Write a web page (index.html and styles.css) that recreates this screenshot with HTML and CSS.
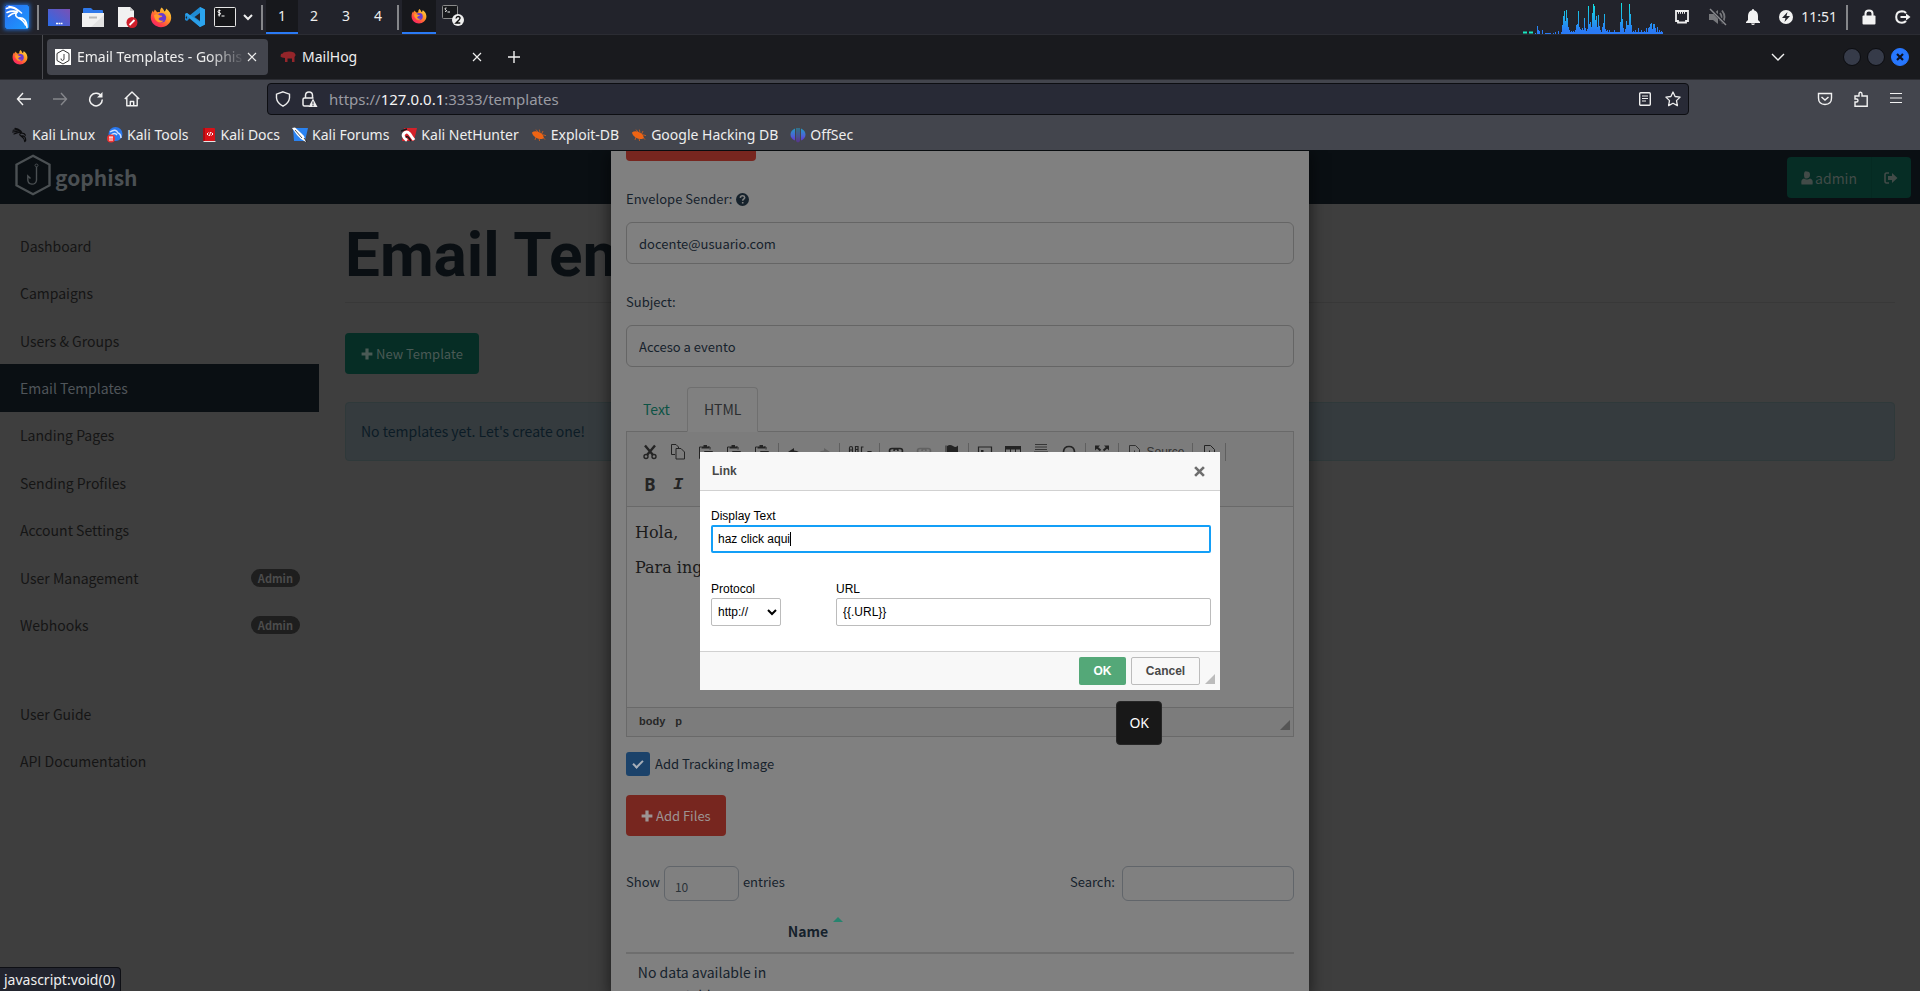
FILE: index.html
```html
<!DOCTYPE html>
<html lang="en">
<head>
<meta charset="utf-8">
<title>Email Templates - Gophish</title>
<link rel="stylesheet" href="styles.css">
</head>
<body>
<svg class="defs" aria-hidden="true">
  <defs>
    <linearGradient id="g-kali" x1="0" y1="0" x2="1" y2="1"><stop offset="0" stop-color="#2a6cf0"/><stop offset="1" stop-color="#1b9bff"/></linearGradient>
    <linearGradient id="g-desk" x1="0" y1="1" x2="1" y2="0"><stop offset="0" stop-color="#2a6be8"/><stop offset="1" stop-color="#7a50b4"/></linearGradient>
    <linearGradient id="g-fox" x1="1" y1="0" x2="0.2" y2="1"><stop offset="0" stop-color="#ffe14a"/><stop offset="0.45" stop-color="#ff9524"/><stop offset="0.8" stop-color="#ff3b4a"/><stop offset="1" stop-color="#f5246d"/></linearGradient>
    <linearGradient id="g-off" x1="0" y1="0" x2="0" y2="1"><stop offset="0" stop-color="#1f9fc4"/><stop offset="0.55" stop-color="#4c62d6"/><stop offset="1" stop-color="#6a22c8"/></linearGradient>
    <linearGradient id="g-cpu" gradientUnits="userSpaceOnUse" x1="0" y1="0" x2="0" y2="34"><stop offset="0" stop-color="#0ff0dc"/><stop offset="0.9" stop-color="#2a7af5"/></linearGradient>
    <symbol id="dragon" viewBox="0 0 16 16"><path d="M1.2 3.2 Q4 2.2 8 3.8 M.6 5 Q4 4.4 7.6 5 M2 7 Q5 5.6 8 5.2 M3 1.4 Q6 1.8 8.4 3.8 Q10 5 8.8 6 Q6.6 7.4 9 9 Q14.2 8.4 13.6 13.8 M9 6.2 Q12.6 5.6 13.4 8.2 M9 9 Q12 10.6 12.8 14.6" fill="none" stroke="currentColor" stroke-width="1.2" stroke-linecap="round"/></symbol>
    <symbol id="firefox" viewBox="0 0 22 22"><path d="M11.6 1.4 C13.2 2.6 14 4 14.2 5.6 C15.6 5 16.2 3.6 16 2.6 C19.6 5 21.4 8.4 21.2 12 C20.8 17.4 16.4 21.2 11 21.2 C5.2 21.2 1 17 .8 11.6 C.8 8.6 1.8 6 3 4.6 L3.6 6.4 L4.8 3.4 L7.2 6.2 C8.4 6 9 6 10 6.2 C9.8 4.4 10.4 2.6 11.6 1.4 Z" fill="url(#g-fox)"/><circle cx="11.4" cy="11.8" r="4.8" fill="#6a3ad0"/><path d="M4 9 Q7 7 10 9.6 Q12.6 9.4 12.2 10.8 Q9 11.4 8.4 13 Q10 15.6 13.6 14.4 Q11.4 17.6 7.6 15.8 Q4.2 13.4 4 9Z" fill="#ff9a2a"/></symbol>
    <symbol id="bug" viewBox="0 0 16 16"><path d="M1 5.4 C4 3 8.4 4.6 11.6 7.4 L12.8 10.6 C12.6 12 10.4 12.4 8 11.8 C4.6 11 1.6 8.6 1 5.4Z" fill="#ee6414"/><path d="M5 2.600 L7 5 M8.4 2.6 L9 5.6 M12 4 L10.6 7 M11.8 7.8 L15 8.6 M11.6 10 L14 12.6 M8 11 L8.6 14 M5 9.8 L4 13" stroke="#ee6414" stroke-width=".7"/></symbol>
    <symbol id="plus" viewBox="0 0 12 12"><path d="M4.4 0.6h3.2v3.8h3.8v3.2H7.6v3.8H4.4V7.6H.6V4.4h3.8Z" fill="currentColor"/></symbol>
    <symbol id="close" viewBox="0 0 10 10"><path d="M1 1l8 8M9 1l-8 8" stroke="currentColor" stroke-width="1.2"/></symbol>
    <symbol id="hook" viewBox="0 0 36 48"><path d="M18 2 L34.500 12 V36 L18 46 L1.500 36 V12Z" fill="none" stroke="currentColor" stroke-width="2.400"/><circle cx="21.500" cy="13" r="1.500" fill="none" stroke="currentColor"/><path d="M21.500 14.500 V30 Q21 34.500 17 34.500 Q12.500 34 12.800 28.500 V25 L15.500 28" fill="none" stroke="currentColor" stroke-width="1.400"/></symbol>
    <symbol id="paste" viewBox="0 0 16 16"><path d="M3.500 14.500H1.500V3h2M12 5.500V3h-2M6.500 14.500V7.500h8v7Z" fill="none" stroke="currentColor"/><path d="M3.500 4.500V2.500H5.500V1H9v1.500h2v2Z" fill="currentColor"/></symbol>
    <symbol id="chain" viewBox="0 0 16 16"><path d="M7 9.500H4Q1.500 9.500 1.500 7T4 4.500h3.500Q10 4.500 10 7M9 9.500h3Q14.500 9.500 14.500 7T12 4.500H9Q6 4.500 6 7" fill="none" stroke="currentColor" stroke-width="1.600"/></symbol>
    <symbol id="page" viewBox="0 0 16 16"><path d="M3.500 14.500v-13h6l4 4v9Z" fill="none" stroke="currentColor"/><path d="M6 9h5M8.500 6.500v5" stroke="currentColor"/></symbol>
  </defs>
</svg>

<header class="panel">
  <button class="launcher kali" aria-label="Applications"><svg width="24" height="24" viewBox="0 0 24 24"><rect width="24" height="24" rx="2" fill="url(#g-kali)"/><path d="M1.500 3.500Q7 .8 12.500 5.200M2 7.500Q6.500 5.500 12 6.500M3.500 11.500Q7 8 12 7.500M4 1.500Q10 2 13 5.200 L16.500 8M12.500 7Q8.500 10.800 13.500 13Q21.500 12 22 22.500M13.500 13Q18.500 15.500 20.500 20" fill="none" stroke="#fff" stroke-width="1.600" stroke-linecap="round"/></svg></button>
  <span class="rule"></span>
  <div class="launchers">
    <button class="launcher" aria-label="Show desktop"><svg width="22" height="22" viewBox="0 0 22 22"><rect y="3" width="22" height="17" fill="url(#g-desk)"/><path d="M8 17.500h2M10.500 17.500h2M13 17.500h1.500" stroke="#fff" stroke-width="1.400"/></svg></button>
    <button class="launcher" aria-label="Files"><svg width="22" height="22" viewBox="0 0 22 22"><path d="M1 8V3q0-1 1-1h7l2 2h9q1 0 1 1v4Z" fill="#2f78ea"/><rect y="7" width="22" height="14" fill="#f1f1f1"/><path d="M22 9v12H9Z" fill="#e2e2e2"/><path d="M7 11.500h8" stroke="#b9b9b9" stroke-width="2"/></svg></button>
    <button class="launcher" aria-label="Text editor"><svg width="22" height="22" viewBox="0 0 22 22"><path d="M2 1h12l4 4v16H2Z" fill="#f1f1f1"/><path d="M14 1l4 4h-4Z" fill="#c9c9c9"/><circle cx="16" cy="16.500" r="5.500" fill="#cf1f2b"/><path d="M13.500 19l5-5" stroke="#fff" stroke-width="1.800"/></svg></button>
    <button class="launcher" aria-label="Firefox"><svg width="22" height="22"><use href="#firefox"/></svg></button>
    <button class="launcher" aria-label="Code"><svg width="22" height="22" viewBox="0 0 22 22"><path d="M16 1l5 2.500v15L16 21 5.500 12.500 3 15l-2-1V8l2-1 2.500 2.500Z" fill="#1f8ad2"/><path d="M1 8l2-1 13 9v5Z" fill="#2b9fe8"/><path d="M16 1l5 2.500v15L16 21Z" fill="#2ba4ee"/><path d="M16 7v8l-5.500-4Z" fill="#22232b"/><path d="M1.500 11.500l1.500-1.500v3Z" fill="#22232b"/></svg></button>
    <button class="launcher term" aria-label="Terminal"><svg width="22" height="22" viewBox="0 0 22 22"><rect x=".5" y="1.500" width="21" height="19" rx="1" fill="#151619" stroke="#e6e6e6"/><path d="M6.500 4.500q-2.500-.3-2.500 1t1.300 1.200 1.200 1.200q0 1.200-2.600 1M5.200 3.500v7M7.500 10h3" fill="none" stroke="#fff"/></svg></button>
    <button class="launcher chev" aria-label="More"><svg width="10" height="22" viewBox="0 0 10 22"><path d="M1 9l4 4 4-4" fill="none" stroke="#eee" stroke-width="2"/></svg></button>
  </div>
  <span class="rule"></span>
  <nav class="spaces"><button class="space on">1</button><button class="space">2</button><button class="space">3</button><button class="space">4</button></nav>
  <span class="rule"></span>
  <button class="task on" aria-label="Firefox window"><svg width="16" height="16"><use href="#firefox"/></svg></button>
  <button class="task" aria-label="Terminal windows"><svg width="22" height="22" viewBox="0 0 22 22"><rect x=".5" y=".5" width="15" height="13" rx="1" fill="#17181b" stroke="#8a8a8a"/><path d="M4.500 3q-2 0-1.500 1t1.500 1.500-1.500 1M5.500 7H8" fill="none" stroke="#eee"/><circle cx="16" cy="15" r="6" fill="#efefef"/><path d="M14 13.500q.3-2 2.200-2t1.800 1.800q0 1-4 4.700h4.300" fill="none" stroke="#111" stroke-width="1.400"/></svg></button>
  <span class="grow"></span>
  <svg class="cpu" width="140" height="34" viewBox="0 0 140 34"><path d="M0 32.500h4M6 32.500h4" stroke="#19e6c0" stroke-width="2"/><path d="M12.500 34v-1M14.500 34v-8M15.500 34v-4M16.500 34v-3M19.500 34v-4M22 33.500h6M30.500 34v-1M32.500 34v-2M35.500 34v-3M38 33h4M39.500 34v-9M40.500 34v-18M41.500 34V11M42.500 34V21M43.500 34V10M44.500 34V18M45.500 34v-7M46.500 34v-4M48.500 34v-3M50.500 34v-3M52.500 34v-4M53.500 34v-9M54.500 34v-10M55.500 34V11M56.500 34v-7M57.500 34v-5M58.500 34v-4M59.500 34v-6M60.500 34v-4M61.500 34V18M62.500 34v-6M63.500 34v-3M64.500 34v-5M65.500 34V6M66.500 34V24M67.500 34V22M68.500 34V27M69.500 34V13M70.500 34V4M71.500 34V6M72.500 34V20M73.500 34V16M74.500 34v-7M75.500 34V15M76.500 34v-8M77.500 34v-4M79.500 34v-7M80.500 34V23M81.500 34V14M82.500 34v-5M83.500 34v-3M84.500 34v-4M86.500 34v-4M88.500 34v-2M91.500 34v-4M93 33h4M97.500 34V22M98.500 34V3M99.500 34V19M100.500 34v-6M102.500 34v-5M103.500 34V21M104.500 34v-9M105.500 34v-9M106.500 34V4M107.500 34V14M108.500 34v-9M110.500 34v-3M112.500 34v-4M115.500 34v-6M118.500 34v-4M121.500 34v-3M123.500 34v-6M125.500 34v-6M126.500 34v-7M127.500 34v-10M128.500 34v-11M129.500 34v-5M130.500 34V24M131.500 34V24M132.500 34v-6M134.500 34v-7M136.500 34v-4M138.500 34v-3" stroke="url(#g-cpu)"/><path d="M38 33h102" stroke="#2a7af5" stroke-width="2"/></svg>
  <div class="tray">
    <button class="launcher" aria-label="Network"><svg width="16" height="16" viewBox="0 0 16 16"><path d="M2 2h12v10h-2v1.500H4V12H2Z" fill="none" stroke="#eee" stroke-width="1.800"/><path d="M4 3.500h8" stroke="#eee" stroke-width="2.500" stroke-dasharray="1 1"/></svg></button>
    <button class="launcher" aria-label="Volume"><svg width="18" height="18" viewBox="0 0 18 18"><path d="M0 6h4l5-4v14l-5-4H0Z" fill="#77787c"/><path d="M11 5q3 4 0 8M13 2.500q5 6.500 0 13" fill="none" stroke="#77787c" stroke-width="1.800"/><path d="M2 1l15 16" stroke="#22232b" stroke-width="3"/><path d="M1 1l16 16" stroke="#8a8b8f" stroke-width="1.500"/></svg></button>
    <button class="launcher" aria-label="Notifications"><svg width="14" height="16" viewBox="0 0 14 16"><path d="M7 0q1 0 1 1.200Q12 2.500 12 7v4l2 2v1H0v-1l2-2V7q0-4.500 4-5.800Q6 0 7 0ZM5 14.500h4Q8.500 16 7 16t-2-1.500Z" fill="#f2f2f2"/></svg></button>
    <button class="launcher" aria-label="Power"><svg width="14" height="14" viewBox="0 0 14 14"><circle cx="7" cy="7" r="7" fill="#f2f2f2"/><path d="M8.500 2L3 8h3.500L5.500 12 11 6H7.500Z" fill="#22232b"/></svg></button>
  </div>
  <time class="clock">11:51</time>
  <span class="rule"></span>
  <button class="launcher lock" aria-label="Lock"><svg width="14" height="16" viewBox="0 0 14 16"><rect x=".5" y="6.500" width="13" height="9" rx="1" fill="#f2f2f2"/><path d="M3.500 8V4.500q0-3 3.500-3t3.500 3V8" fill="none" stroke="#f2f2f2" stroke-width="2"/></svg></button>
  <button class="launcher" aria-label="Log out"><svg width="16" height="14" viewBox="0 0 16 14"><path d="M11 3Q9.500 1.200 7 1.200 1.200 1.500 1.200 7t5.800 5.800q2.500 0 4-1.800" fill="none" stroke="#f2f2f2" stroke-width="2"/><path d="M5.500 7H12" stroke="#f2f2f2" stroke-width="2"/><path d="M11 3.500L15.500 7 11 10.500Z" fill="#f2f2f2"/></svg></button>
</header>

<div class="tabs-bar">
  <span class="pinned"><svg width="16" height="16"><use href="#firefox"/></svg></span>
  <div class="tab on"><svg width="16" height="16" viewBox="0 0 16 16"><rect width="16" height="16" fill="#fff"/><path d="M8 1l6 3.500v7L8 15l-6-3.500v-7Z" fill="none" stroke="#333"/><path d="M9 5v5q-.3 1.500-1.600 1.500T6 9.500" fill="none" stroke="#444"/></svg><span class="tab-title fade">Email Templates - Gophish</span><button class="tab-x" aria-label="Close tab"><svg width="10" height="10"><use href="#close"/></svg></button></div>
  <div class="tab"><svg width="16" height="16" viewBox="0 0 16 16"><path d="M1 5q2 0 3-2 1 .5 1.500 0Q10 2 14 3.500q2 2 1.500 3L14.500 8v5H12V9.500H7.500V13H5V9L2 8.500.5 7.500Z" fill="#94252a"/></svg><span class="tab-title">MailHog</span><button class="tab-x" aria-label="Close tab"><svg width="10" height="10"><use href="#close"/></svg></button></div>
  <button class="tool" aria-label="New tab"><svg width="12" height="12" viewBox="0 0 12 12"><path d="M6 0v12M0 6h12" stroke="currentColor" stroke-width="1.400"/></svg></button>
  <span class="grow"></span>
  <button class="tool" aria-label="List all tabs"><svg width="14" height="14" viewBox="0 0 14 14"><path d="M1 4l6 6 6-6" fill="none" stroke="currentColor" stroke-width="1.400"/></svg></button>
  <div class="win"><button class="dot" aria-label="Minimize"></button><button class="dot" aria-label="Maximize"></button><button class="dot blue" aria-label="Close"><svg width="8" height="8" viewBox="0 0 8 8"><path d="M1 1l6 6M7 1L1 7" stroke="#0d1020" stroke-width="2.200"/></svg></button></div>
</div>

<div class="chrome">
  <div class="navbar">
    <div class="nav-left">
      <button class="tool" aria-label="Back"><svg width="16" height="16" viewBox="0 0 16 16"><path d="M15 8H1.500M7 2L1.500 8 7 14" fill="none" stroke="currentColor" stroke-width="1.400"/></svg></button>
      <button class="tool dim" aria-label="Forward"><svg width="16" height="16" viewBox="0 0 16 16"><path d="M1 8h13.500M9 2l5.500 6L9 14" fill="none" stroke="currentColor" stroke-width="1.400"/></svg></button>
      <button class="tool" aria-label="Reload"><svg width="16" height="16" viewBox="0 0 16 16"><path d="M13.500 5.500A6.300 6.300 0 1 0 14.300 8.500" fill="none" stroke="currentColor" stroke-width="1.500"/><path d="M14.500 1v5.500H9Z" fill="currentColor"/></svg></button>
      <button class="tool" aria-label="Home"><svg width="16" height="16" viewBox="0 0 16 16"><path d="M.8 8L8 1l7.200 7M2.800 6.500v8.300h10.400V6.500M6.300 14.500v-4h3.400v4" fill="none" stroke="currentColor" stroke-width="1.400" stroke-linejoin="round"/></svg></button>
    </div>
    <div class="urlbar">
      <svg width="16" height="16" viewBox="0 0 16 16"><path d="M8 .8l6.500 2.400V7q-.5 5-6.500 8.200Q2 12 1.500 7V3.200Z" fill="none" stroke="#eee" stroke-width="1.400"/></svg>
      <svg width="16" height="17" viewBox="0 0 16 17"><path d="M3.500 7V4.500Q3.500 1 7 1t3.500 3.500V7M7 15H2.500Q1 15 1 13.500v-5Q1 7 2.500 7h9" fill="none" stroke="#eee" stroke-width="1.500"/><path d="M11 7.500L15.500 16h-9Z" fill="#eee"/><path d="M11 10.500v3M11 14v1.200" stroke="#282a36"/></svg>
      <span class="url">https://<b>127.0.0.1</b>:3333/templates</span>
      <svg width="14" height="14" viewBox="0 0 14 14"><rect x="1.700" y=".7" width="10.600" height="12.600" rx="1" fill="none" stroke="#eee" stroke-width="1.400"/><path d="M4 4h6M4 6.500h6M4 9h4" stroke="#eee"/></svg>
      <svg class="star" width="16" height="16" viewBox="0 0 16 16"><path d="M8 1l2.100 4.500 5 .6-3.600 3.500.9 5L8 12.200l-4.400 2.400.9-5L.9 6.100l5-.6Z" fill="none" stroke="#eee" stroke-width="1.300" stroke-linejoin="round"/></svg>
    </div>
    <div class="nav-right">
      <button class="tool" aria-label="Pocket"><svg width="16" height="16" viewBox="0 0 16 16"><path d="M1.500 2.500h13V7q0 6.500-6.500 6.500T1.500 7Z" fill="none" stroke="currentColor" stroke-width="1.400"/><path d="M4.500 6L8 9l3.500-3" fill="none" stroke="currentColor" stroke-width="1.500"/></svg></button>
      <button class="tool" aria-label="Extensions"><svg width="16" height="16" viewBox="0 0 16 16"><path d="M2 15.200V11h1.500q1.500 0 1.500-1.500T3.500 8H2V5h4V3q0-1.800 1.500-1.800T9 3v2h5.200v10.200Z" fill="none" stroke="currentColor" stroke-width="1.400"/></svg></button>
      <button class="tool" aria-label="Menu"><svg width="14" height="14" viewBox="0 0 14 14"><path d="M1 2.500h12M1 7h12M1 11.500h12" stroke="currentColor" stroke-width="1.200"/></svg></button>
    </div>
  </div>
  <nav class="bookmarks">
    <a href="#"><svg class="black" width="16" height="16"><use href="#dragon"/></svg>Kali Linux</a>
    <a href="#"><svg width="16" height="16" viewBox="0 0 16 16"><circle cx="8.500" cy="7" r="7" fill="#2a78ee"/><path d="M3 5q6-4 8 1 3 1 3 5M4 8q4-3 6 0" fill="none" stroke="#cfe2ff" stroke-width="1.500"/><circle cx="4" cy="11.500" r="4" fill="#e33"/><path d="M2 10h4M3 10v4M5 10v4" stroke="#fff"/></svg>Kali Tools</a>
    <a href="#"><svg width="16" height="16" viewBox="0 0 16 16"><rect x="2" y="1" width="12" height="13" rx="1" fill="#d91118"/><path d="M2 1h2v13H2Z" fill="#a90c12"/><path d="M2.500 14h12v1h-12Z" fill="#e6e6e6"/><path d="M7.500 5.500L6 7l1.500 1.500M10.500 5.500L12 7l-1.500 1.500M9.500 5l-1 4" fill="none" stroke="#fff"/></svg>Kali Docs</a>
    <a href="#"><svg width="16" height="16" viewBox="0 0 16 16"><path d="M1 1h15l-3 13H2Z" fill="#2a83f2"/><path d="M0 1l3-.5L9 6l3 3 2 6-5-3-4-4Z" fill="#fff"/><path d="M3 3l7 8M12 11l3 4" stroke="#222" stroke-width=".8"/></svg>Kali Forums</a>
    <a href="#"><svg width="16" height="16" viewBox="0 0 16 16"><path d="M3 1h13l-3 13H1Z" fill="#d4222a"/><path d="M6 13.500Q0 9 3.500 6t7 3.500l2.500 3.500" fill="none" stroke="#fff" stroke-width="3"/><path d="M0 4l6-2M5 10.500q1-2 3 .5l2 3" stroke="#17181b" stroke-width="1.500" fill="none"/></svg>Kali NetHunter</a>
    <a href="#"><svg width="16" height="16"><use href="#bug"/></svg>Exploit-DB</a>
    <a href="#"><svg width="16" height="16"><use href="#bug"/></svg>Google Hacking DB</a>
    <a href="#"><svg width="16" height="16" viewBox="0 0 16 16"><path d="M5 1.500v12Q.5 11.500 .5 7.500T5 1.500ZM6.500 1h1v14.500q-1-.5-1-2ZM8.500 1h1v12.500q0 1.500-1 2ZM11 1.500q4.500 2 4.500 6t-4.500 6Z" fill="url(#g-off)"/></svg>OffSec</a>
  </nav>
</div>

<main class="page">
  <header class="app-bar">
    <a class="brand" href="#"><svg width="36" height="42" viewBox="0 0 36 48" preserveAspectRatio="none"><use href="#hook"/></svg><span>gophish</span></a>
    <div class="user-group">
      <button class="btn user"><svg width="12" height="14" viewBox="0 0 12 14"><path d="M6 .5q3 0 3 3.200T6 7.500 3 3.700 6 .5ZM.5 13.500Q-.5 8 3 7.500q3 2 6 0 3.500.5 2.500 6Z" fill="currentColor"/></svg>admin</button><button class="btn out" aria-label="Sign out"><svg width="14" height="12" viewBox="0 0 14 12"><path d="M5 1H2.500Q1 1 1 3v6q0 2 1.500 2H5" fill="none" stroke="currentColor" stroke-width="1.600"/><path d="M4 4h4V1l5.500 5L8 11V8H4Z" fill="currentColor"/></svg></button>
    </div>
  </header>
  <div class="columns">
    <nav class="sidebar">
      <div class="menu">
        <a href="#">Dashboard</a><a href="#">Campaigns</a><a href="#">Users &amp; Groups</a><a href="#" class="on">Email Templates</a><a href="#">Landing Pages</a><a href="#">Sending Profiles</a><a href="#">Account Settings</a><a href="#">User Management<span class="badge">Admin</span></a><a href="#">Webhooks<span class="badge">Admin</span></a>
      </div>
      <div class="menu short"><a href="#">User Guide</a><a href="#">API Documentation</a></div>
    </nav>
    <section class="content">
      <h1>Email Templates</h1>
      <button class="btn new"><svg width="12" height="12"><use href="#plus"/></svg>New Template</button>
      <div class="alert">No templates yet. Let's create one!</div>
    </section>
  </div>

  <div class="layer">
    <form class="modal">
      <button type="button" class="btn red import" aria-label="Import Email"></button>
      <label class="field-label" for="sender">Envelope Sender: <svg width="13" height="13" viewBox="0 0 13 13"><circle cx="6.500" cy="6.500" r="6.500" fill="currentColor"/><path d="M4.300 4.800q.2-2 2.200-2t2.200 1.700q0 1-1.200 1.700-.8.500-.8 1.600M6.700 9v1.600" fill="none" stroke="#808080" stroke-width="1.600"/></svg></label>
      <input class="field" id="sender" type="text" value="docente@usuario.com">
      <label class="field-label" for="subject">Subject:</label>
      <input class="field" id="subject" type="text" value="Acceso a evento">
      <div class="mode-tabs"><a href="#">Text</a><a href="#" class="on">HTML</a></div>
      <div class="editor">
        <div class="cke-bar">
          <div class="cke-row">
            <button type="button" class="ck" aria-label="Cut"><svg viewBox="0 0 16 16"><path d="M3 1.500L11 11M13 1.500L5 11" stroke="currentColor" stroke-width="2.400"/><circle cx="4" cy="12.500" r="2" fill="none" stroke="currentColor" stroke-width="1.400"/><circle cx="12" cy="12.500" r="2" fill="none" stroke="currentColor" stroke-width="1.400"/></svg></button>
            <button type="button" class="ck" aria-label="Copy"><svg viewBox="0 0 16 16"><path d="M5 10.500H1.500v-10H6l2.500 2.500v1M6 4.500h5l3.500 3.500v7H6Z" fill="none" stroke="currentColor"/></svg></button>
            <button type="button" class="ck" aria-label="Paste"><svg><use href="#paste"/></svg></button>
            <button type="button" class="ck" aria-label="Paste as plain text"><svg><use href="#paste"/></svg></button>
            <button type="button" class="ck" aria-label="Paste from Word"><svg><use href="#paste"/></svg></button>
            <i class="sep"></i>
            <button type="button" class="ck" aria-label="Undo"><svg viewBox="0 0 16 16"><path d="M1 8l6-4v2.500q6 0 7 6-3-3-7-2.500V12Z" fill="currentColor"/></svg></button>
            <button type="button" class="ck off" aria-label="Redo"><svg viewBox="0 0 16 16"><path d="M15 8L9 4v2.500q-6 0-7 6 3-3 7-2.500V12Z" fill="currentColor"/></svg></button>
            <i class="sep"></i>
            <button type="button" class="ck wide" aria-label="Spell check"><svg class="abc" viewBox="0 0 24 16"><path d="M1.500 9V4q0-1.500 1.500-1.500T4.500 4v5M1.500 6h3M7.500 9V2.500H10v6H7.500M7.500 5.500H10M15.500 3h-2v6h2" fill="none" stroke="currentColor" stroke-width="1.200"/><path d="M19 7h5l-2.500 3Z" fill="currentColor"/></svg></button>
            <i class="sep"></i>
            <button type="button" class="ck" aria-label="Link"><svg><use href="#chain"/></svg></button>
            <button type="button" class="ck off" aria-label="Unlink"><svg><use href="#chain"/></svg></button>
            <button type="button" class="ck" aria-label="Anchor"><svg viewBox="0 0 16 16"><path d="M2 1.500V16" stroke="currentColor"/><path d="M3 2q3-2 6 0t5-.5v8.500H3Z" fill="currentColor"/></svg></button>
            <i class="sep"></i>
            <button type="button" class="ck" aria-label="Image"><svg viewBox="0 0 16 16"><path d="M1.500 13.500V3h13v10.500Z" fill="none" stroke="currentColor" stroke-width="1.200"/><path d="M4 6h2.500v2H4ZM2 13l4-3 3 1 2-3 3 5Z" fill="currentColor"/></svg></button>
            <button type="button" class="ck" aria-label="Table"><svg viewBox="0 0 16 16"><path d="M0 2h16v3.500H0Z" fill="currentColor"/><path d="M.5 5v9M5.500 5v9M10.500 5v9M15.500 5v9M0 13.500h16" stroke="currentColor"/></svg></button>
            <button type="button" class="ck" aria-label="Horizontal line"><svg viewBox="0 0 16 16"><path d="M2 .5h12M2 3h12M2 5.500h12M2 12h12" stroke="currentColor" stroke-width=".8"/><path d="M1 8.500h14" stroke="currentColor" stroke-width="2"/></svg></button>
            <button type="button" class="ck" aria-label="Special character"><svg viewBox="0 0 16 16"><path d="M1.500 14h4v-2Q2.500 10 2.500 7.500 3 2.500 8 2.500t5.500 5q0 2.500-3 4.500v2h4" fill="none" stroke="currentColor" stroke-width="1.700"/></svg></button>
            <i class="sep"></i>
            <button type="button" class="ck" aria-label="Maximize"><svg viewBox="0 0 16 16"><path d="M1 1.500h5L1 6.500ZM15 1.500h-5l5 5ZM1 14.500h5l-5-5ZM15 14.500h-5l5-5Z" fill="currentColor"/><path d="M2 2.500l4.500 4M14 2.500l-4.500 4M2 13.500l4.500-4M14 13.500l-4.500-4" stroke="currentColor" stroke-width="2"/></svg></button>
            <i class="sep"></i>
            <button type="button" class="ck source"><svg><use href="#page"/></svg>Source</button>
            <i class="sep"></i>
            <button type="button" class="ck" aria-label="Preview"><svg><use href="#page"/></svg></button>
            <i class="sep"></i>
          </div>
          <div class="cke-row"><button type="button" class="ck letter"><b>B</b></button><button type="button" class="ck letter"><em>I</em></button><button type="button" class="ck letter"><s>S</s></button></div>
        </div>
        <div class="cke-text"><p>Hola,</p><p>Para ingresar</p></div>
        <div class="cke-path"><span>body</span><span>p</span><i class="grip"></i></div>
      </div>
      <div class="check"><input type="checkbox" id="track" checked><label for="track">Add Tracking Image</label></div>
      <button type="button" class="btn red add"><svg width="12" height="12"><use href="#plus"/></svg>Add Files</button>
      <div class="filters">
        <label for="len">Show</label><select id="len"><option>10</option></select><label for="len">entries</label>
        <span class="grow"></span>
        <label for="find">Search:</label><input id="find" type="text">
      </div>
      <table class="files">
        <colgroup><col class="col-a"><col class="col-b"><col></colgroup>
        <thead><tr><th colspan="2"><span class="name">Name<i class="asc"></i></span></th><th></th></tr></thead>
        <tbody><tr><td>No data available in table</td><td></td><td></td></tr></tbody>
      </table>
    </form>
  </div>

  <div class="layer">
    <form class="dialog">
      <div class="dlg-head"><span>Link</span><button type="button" aria-label="Close"><svg width="11" height="11" viewBox="0 0 10 10"><path d="M1 1l8 8M9 1L1 9" stroke="#6e6e6e" stroke-width="2.400"/></svg></button></div>
      <div class="dlg-body">
        <label class="dlg-field" for="text">Display Text<input class="focus" id="text" type="text" value="haz click aqui"></label>
        <div class="dlg-pair">
          <label class="dlg-field" for="proto">Protocol<select id="proto"><option>http://</option></select></label>
          <label class="dlg-field" for="url">URL<input id="url" type="text" value="{{.URL}}"></label>
        </div>
      </div>
      <div class="dlg-foot"><button type="button" class="ok">OK</button><button type="button" class="cancel">Cancel</button><i class="grip"></i></div>
      <div class="tip" role="tooltip">OK</div>
    </form>
  </div>
  <div class="status">javascript:void(0)</div>
</main>
</body>
</html>
```

FILE: styles.css
```css
* { box-sizing: border-box; }
body { margin: 0; height: 100vh; display: flex; flex-direction: column; overflow: hidden; font: 14px/20px "Noto Sans", sans-serif; color: #eeeeee; background: #3e3e3e; }
button { border: 0; background: none; padding: 0; font: inherit; color: inherit; }
a { color: inherit; text-decoration: none; }
svg { display: block; flex: none; }
.defs { position: absolute; width: 0; height: 0; }
.grow { flex: 1; }

/* desktop panel */
.panel { display: flex; align-items: center; height: 35px; flex: none; background: #22232b; border-bottom: 1px solid #2b2c33; padding: 0 9px 0 5px; }
.launcher { display: flex; }
.kali { box-shadow: 0 0 4px 1px #2468c8; }
.rule { width: 2px; height: 25px; background: #85868a; margin-left: 8px; }
.launchers { display: flex; gap: 12px; padding-left: 9px; }
.launchers .term { margin-left: -4px; }
.launchers .chev { margin-left: -5px; }
.spaces { display: flex; align-self: stretch; margin-left: 3px; }
.space, .task { width: 32px; align-self: stretch; display: flex; align-items: center; justify-content: center; border-bottom: 2px solid transparent; }
.spaces + .rule { margin-left: 3px; }
.on.space, .on.task { background: #17181c; border-bottom-color: #2a7af5; }
.task { width: 34px; margin-left: 3px; }
.on.task + .task { margin-left: 0; }
.cpu { margin-right: 11px; align-self: flex-end; }
.tray { display: flex; align-items: center; gap: 19px; margin-right: 8px; }
.clock { margin-right: 1px; }
.lock { margin: 0 19px 0 14px; }

/* tab strip */
.tabs-bar { display: flex; align-items: center; height: 44px; flex: none; background: #191a1e; padding-right: 11px; }
.pinned { width: 43px; height: 44px; padding: 14px 0 0 12px; border-right: 1px solid #4a4b50; margin-right: 4px; }
.tab { display: flex; align-items: center; width: 221px; height: 36px; padding: 0 8px; border-radius: 4px; gap: 6px; }
.tab.on { background: #43454d; }
.tab + .tab { margin-left: 4px; width: 217px; padding: 0 4px 0 8px; }
.tab-title { flex: 1; min-width: 0; overflow: hidden; white-space: nowrap; }
.fade { -webkit-mask-image: linear-gradient(to right, #000 80%, transparent 102%); mask-image: linear-gradient(to right, #000 80%, transparent 102%); }
.tab-x { padding: 3px; margin-left: -4px; }
.tool { display: flex; color: #f2f2f2; }
.tab + .tool { margin-left: 19px; }
.tool.dim { color: #85868b; }
.win { display: flex; gap: 6px; margin-left: 58px; }
.dot { width: 18px; height: 18px; border-radius: 50%; background: #363b49; border: 1px solid #0b0c10; display: flex; align-items: center; justify-content: center; }
.dot.blue { background: #2777ff; border-color: #2777ff; }

/* address bar and bookmarks */
.chrome { flex: none; background: #43454d; border-top: 1px solid #2b2c32; height: 71px; }
.navbar { display: flex; align-items: center; padding: 3px 17px 0 16px; }
.nav-left { display: flex; gap: 20px; width: 251px; }
.nav-right { display: flex; gap: 20px; width: 214px; justify-content: flex-end; }
.urlbar { flex: 1; display: flex; align-items: center; gap: 11px; height: 32px; background: #282a36; border: 1px solid #0d0e12; border-radius: 4px; padding: 0 7px; }
.url { flex: 1; color: #9a9ba2; font-size: 15px; }
.url b { font-weight: 400; color: #f4f4f4; }
.star { margin-left: 2px; }
.bookmarks { display: flex; gap: 12px; padding: 10px 12px 0; }
.bookmarks a { display: flex; align-items: center; gap: 4px; white-space: nowrap; }
.black { color: #0c0c0e; }

/* gophish page */
.page { position: relative; flex: 1; min-height: 0; overflow: hidden; display: flex; flex-direction: column; font: 14px/20px "Noto Sans CJK JP", "Noto Sans", sans-serif; }
.app-bar { height: 54px; flex: none; background: #0a0f13; display: flex; justify-content: space-between; align-items: flex-start; padding: 4px 9px 0 15px; }
.brand { display: flex; align-items: center; gap: 4px; font-size: 21px; line-height: 30px; font-weight: 700; color: #4b5053; }
.brand span { padding-top: 3px; }
.btn { height: 41px; display: inline-flex; align-items: center; gap: 3px; padding: 0 15px; border-radius: 4px; color: #4a5a55; background: #062d25; font-size: 13px; }
.user-group { display: flex; padding-top: 3px; }
.user { border-radius: 4px 0 0 4px; border-right: 1px solid #052a22; color: #424b48; font-size: 14px; gap: 2px; padding: 0 14px; }
.out { border-radius: 0 4px 4px 0; padding: 0 13px 0 12px; color: #424b48; }
.columns { flex: 1; display: flex; }
.sidebar { width: 319px; padding-top: 18px; color: #151515; }
.menu { display: grid; grid-auto-rows: 1fr; min-height: 427px; }
.menu.short { min-height: 95px; margin-top: 41px; }
.menu a { display: flex; align-items: center; justify-content: space-between; padding: 0 19px 0 20px; }
.menu .on { background: #0a0f13; color: #50555a; }
.badge { background: #1e1e1e; color: #4c4c4c; font-size: 11px; line-height: 18px; font-weight: 700; border-radius: 9px; padding: 0 7px; }
.content { flex: 1; padding: 0 25px 0 26px; }
h1 { margin: 0; padding: 16px 0 13px; font: 700 62px/69px Roboto, sans-serif; color: #0a0f13; border-bottom: 1px solid #383838; }
.new { margin: 30px 0 28px; padding: 0 16px; }
.alert { height: 59px; padding: 18px 15px; background: #353b3e; border: 1px solid #2f393a; border-radius: 4px; color: #0c1c26; }

/* template form */
.layer { position: absolute; inset: 1px 0 0; display: flex; justify-content: center; align-items: flex-start; pointer-events: none; }
.layer > * { pointer-events: auto; }
.modal { width: 698px; height: 100%; padding: 0 15px; background: #808080; color: #16222c; box-shadow: 0 4px 14px 2px rgba(0, 0, 0, .5); overflow: hidden; display: flex; flex-direction: column; align-items: stretch; font-size: 13px; }
.modal > * { flex: none; }
.red { background: #77261f; color: #9d9493; align-self: flex-start; }
.import { width: 130px; height: 10px; border-radius: 0 0 4px 4px; }
.field-label { display: flex; align-items: center; gap: 4px; margin: 28px 0 13px; }
.field { width: 100%; height: 42px; background: #808080; border: 1px solid #656565; border-radius: 6px; padding: 0 12px; font: inherit; color: #16222c; }
.mode-tabs { display: flex; margin-top: 20px; }
.mode-tabs a { height: 44px; padding: 11px 16px; border: 1px solid transparent; color: #0d5345; font-size: 14px; }
.mode-tabs .on { border-color: #6f6f6f; border-bottom-color: #808080; border-radius: 4px 4px 0 0; background: #808080; color: #2b2d2f; position: relative; height: 45px; margin-bottom: -1px; z-index: 1; }
.editor { border: 1px solid #696969; }
.cke-bar { background: #7c7c7c; padding: 6px 9px 7px; border-bottom: 1px solid #696969; display: grid; gap: 5px; color: #242424; }
.cke-row { display: flex; align-items: center; height: 28px; }
.ck { width: 28px; height: 28px; display: flex; align-items: center; justify-content: center; }
.ck svg { width: 16px; height: 16px; }
.ck.off { color: #626262; }
.ck.wide { width: 35px; }
.ck .abc { width: 24px; }
.ck.source { width: 69px; gap: 4px; font: 12px/16px "Liberation Sans", Arial, sans-serif; color: #333333; }
.ck.letter { font: 17px/20px "Noto Sans", sans-serif; }
.ck em { font: italic 700 17px/20px "Liberation Mono", monospace; }
.sep { width: 1px; height: 18px; margin: 0 2px; background: #5f5f5f; }
.cke-text { height: 200px; padding: 16px 8px; font: 16px/20px "DejaVu Serif", serif; color: #1a1a1a; }
.cke-text p { margin: 0 0 15px; }
.cke-path { display: flex; align-items: center; gap: 10px; height: 29px; padding: 0 3px 2px 12px; border-top: 1px solid #696969; background: #7c7c7c; font: 700 11px/14px "Liberation Sans", Arial, sans-serif; color: #272727; }
.grip { width: 0; height: 0; border-left: 10px solid transparent; border-bottom: 10px solid #555555; margin-left: auto; }
.cke-path .grip { margin-top: 8px; }
.check { display: flex; align-items: center; gap: 5px; margin-top: 15px; height: 24px; }
.check input { appearance: none; width: 24px; height: 24px; margin: 0; border-radius: 3px; background: #1b426a; display: grid; place-items: center; }
.check input::before { content: ""; width: 8px; height: 4px; border: solid #a8afb8; border-width: 0 0 2px 2px; rotate: -45deg; margin-bottom: 2px; }
.add { margin-top: 19px; padding: 0 15px; }
.filters { display: flex; align-items: center; margin-top: 30px; height: 35px; }
.filters select { appearance: none; width: 75px; height: 35px; margin: 0 4px; padding: 7px 10px 0; background: #808080; border: 1px solid #61656a; border-radius: 6px; font: 12px/16px "Noto Sans CJK JP", sans-serif; color: #2a3238; }
.filters input { width: 172px; height: 35px; margin-left: 7px; background: #808080; border: 1px solid #61656a; border-radius: 6px; font: inherit; }
.filters label { padding-bottom: 4px; }
.files { border-collapse: collapse; width: 100%; margin-top: 16px; table-layout: fixed; text-align: center; font-size: 14px; }
.col-a { width: 152px; }
.col-b { width: 212px; }
.files th { height: 36px; padding: 0; border-bottom: 2px solid #6e6e6e; font-weight: 700; vertical-align: top; }
.name { position: relative; display: inline-block; padding-top: 4px; }
.asc { position: absolute; right: -15px; top: 0; border: 5px solid transparent; border-bottom-color: #27846f; border-top: 0; }
.files td { padding: 7px 8px; line-height: 23px; vertical-align: top; }

/* link dialog */
.dialog { position: relative; width: 520px; margin-top: 301px; background: #ffffff; color: #000000; font: 12px/16px "Liberation Sans", Arial, sans-serif; }
.dlg-head { display: flex; align-items: center; justify-content: space-between; height: 39px; padding: 0 15px 0 12px; background: #f8f8f8; border-bottom: 1px solid #d1d1d1; font-weight: 700; color: #484848; }
.dlg-body { padding: 17px 9px 0 11px; height: 160px; }
.dlg-field { display: flex; flex-direction: column; gap: 1px; }
.dlg-field input, .dlg-field select { height: 28px; width: 100%; padding: 0 6px; border: 1px solid #bcbcbc; border-radius: 2px; background: #ffffff; color: #000000; font: inherit; outline: 0; }
.dlg-field .focus { border: 2px solid #139ff7; padding: 0 5px; background: #ffffff linear-gradient(#000000, #000000) 77px center / 1px 14px no-repeat; caret-color: transparent; }
.dlg-field select { padding: 0 0 0 2px; }
.dlg-pair { display: grid; grid-template-columns: 70px 1fr; gap: 55px; margin-top: 28px; }
.dlg-foot { display: flex; align-items: center; justify-content: flex-end; gap: 5px; height: 39px; padding: 0 5px 0 0; background: #f8f8f8; border-top: 1px solid #d1d1d1; font-weight: 700; }
.ok, .cancel { height: 28px; border-radius: 2px; }
.ok { width: 47px; background: #54a878; color: #ffffff; }
.cancel { width: 69px; border: 1px solid #bcbcbc; color: #484848; }
.dlg-foot .grip { margin: 16px 0 0; border-bottom-color: #bcbcbc; }
.tip { position: absolute; top: 249px; right: 58px; height: 44px; padding: 12px; border-radius: 4px; background: #181818; border: 1px solid #262626; color: #ffffff; font: 14px/18px "Noto Sans", sans-serif; }
.status { position: absolute; left: 0; bottom: 0; height: 24px; padding: 0 5px 0 4px; background: #22242e; border: 1px solid #0e0f14; border-width: 1px 1px 0 0; border-radius: 0 4px 0 0; color: #eeeeee; font: 14px/23px "Noto Sans", sans-serif; }
```
